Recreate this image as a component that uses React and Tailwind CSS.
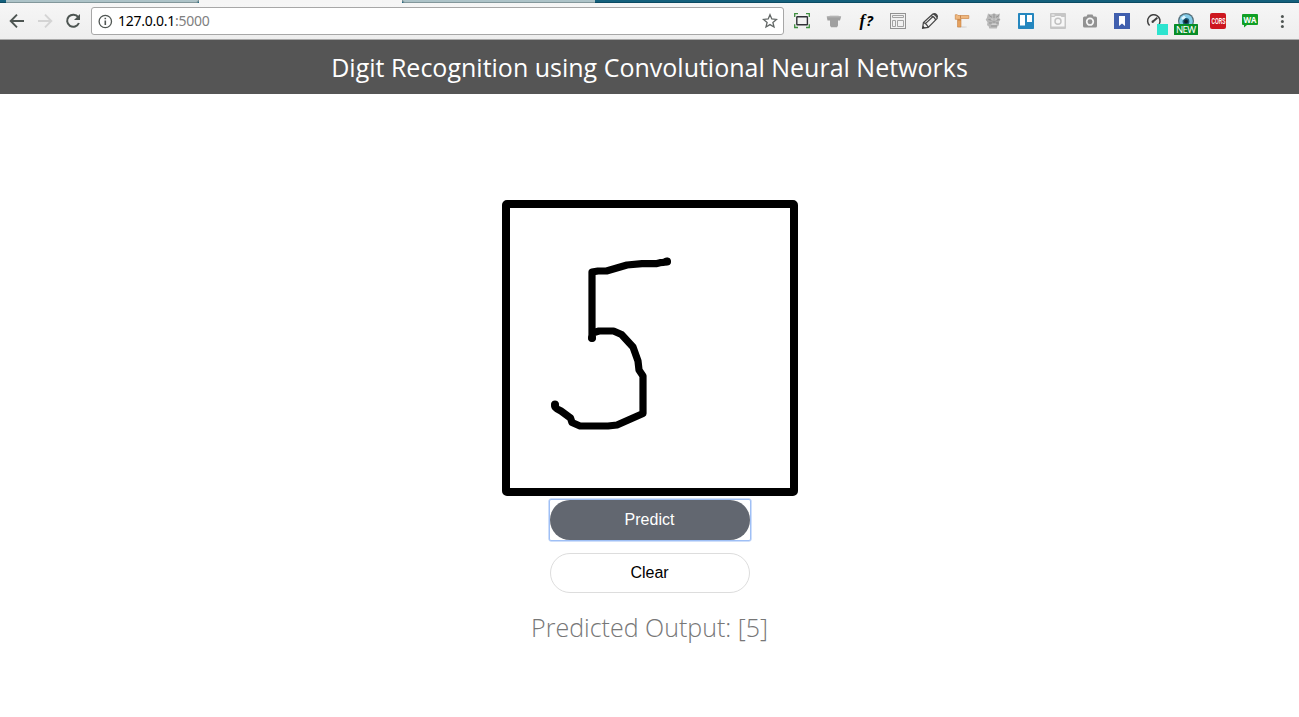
import React from "react";

function Tool({ children, label }) {
  return (
    <svg aria-label={label} className="h-9 w-8 shrink-0 overflow-visible" viewBox="0 3 32 36" fill="none">
      {children}
    </svg>
  );
}

function TabStrip() {
  return (
    <div className="flex h-[3px] bg-[#14607c]">
      <div className="w-[6px] border-b border-[#0b4a62]" />
      <div className="w-[193px] rounded-br-sm border-r border-b border-[#82979b] bg-[#adc3c8]" />
      <div className="w-[203px] bg-[#f5f5f5]" />
      <div className="w-[193px] rounded-bl-sm border-b border-l border-[#82979b] bg-[#adc3c8]" />
      <div className="flex-1 border-b border-[#0b4a62]" />
    </div>
  );
}

function Extensions() {
  return (
    <div className="ml-0.5 flex">
      <Tool label="capture">
        <path d="M8.7 17v-3.3H12M20 13.7h3.3V17M23.3 24.3v3.2H20M12 27.5H8.7v-3.2" stroke="#3f8f3f" strokeWidth="1.3" />
        <rect x="10.8" y="16.8" width="10.6" height="8" rx=".5" stroke="#303036" strokeWidth="1.4" />
      </Tool>
      <Tool label="pillar">
        <path d="M8.7 16.5l3.5-.8h8l3 .8-1.2 4h-2v5l-1 1.7h-6l-1-1.7v-5h-2.5z" fill="#a0a0a0" />
        <path d="M9 16.8h14" stroke="#bcbcbc" />
      </Tool>
      <Tool label="font finder">
        <text x="9.5" y="25.500" fill="#000" className="font-['Liberation_Serif',serif] text-[17px] font-bold italic">f</text>
        <text x="16.300" y="25.500" fill="#000" className="font-['Open_Sans',sans-serif] text-[14.5px] font-bold italic">?</text>
      </Tool>
      <Tool label="layout">
        <rect x="8.5" y="13.5" width="15" height="15" fill="#f2f2f2" stroke="#929292" />
        <path d="M10.5 15.5h11v2h-11zM10.5 20.5h3v6h-3zM15.5 20.5h6v6h-6z" stroke="#a3a3a3" />
      </Tool>
      <Tool label="pencil">
        <path d="M8.6 28.2l.8-5.600L18.800 14q2-1.200 3.800.6t.6 3.800l-9 9zM9.400 22.600q3.200.6 4.800 4.800M17.100 15.600q3.500.9 4.500 4.300M19 13.900q3.200 1 4.300 4.100M11.400 23.600l7.900-7.300" stroke="#454545" strokeWidth="1.200" />
        <path d="M8.600 28.200l.4-2.500 2 2z" fill="#333" />
      </Tool>
      <Tool label="hammer">
        <ellipse cx="16" cy="27" rx="5" ry="1" fill="#dedede" />
        <path d="M11.500 18h3.500v9h-3.500z" fill="#e5a15e" stroke="#c98343" strokeWidth=".6" />
        <path d="M9.300 14.700h2l.7.8h10.800v3H15l-.8.8H9.300z" fill="#efb77e" stroke="#cc884b" strokeWidth=".7" />
        <path d="M14.500 15.500v3M12 20h3" stroke="#bd773b" strokeWidth=".8" />
      </Tool>
      <Tool label="mascot">
        <path d="M10 13.500l3 1 3-1.300 3 1.300 3-1-.8 4.200 1.200 2-1.800 2.500.4 3-1.400.8-.8 2.500h-7.500l-.8-2.500-1.500-.8.500-3-1.800-2.500 1.200-2z" fill="#b8b8b8" />
        <path d="M11 15.500l3 1.800M21 15.500l-3 1.800M10.500 19.500l3 .7M21.500 19.500l-3 .7M11 23h3M21 23h-3M16 14v4M13 26h6M14.500 22h3" stroke="#929292" />
        <path d="M14 18.600v1.200M18 18.600v1.200M13.500 24.200h5" stroke="#dedede" />
      </Tool>
      <Tool label="boards">
        <rect x="8" y="13" width="16" height="16" rx=".7" fill="#2587bf" />
        <path d="M10 15h5v10.500h-5zM17 15h5v7h-5z" fill="#fff" />
      </Tool>
      <Tool label="snapshot">
        <rect x="8" y="13" width="16" height="16" rx="1" fill="#c6c6c6" />
        <path d="M9.500 17h3l1-1h5l1 1h3v9.500h-13z" fill="#f7f7f7" />
        <circle cx="16" cy="21.300" r="3" stroke="#c2c2c2" strokeWidth="1.500" />
        <path d="M9.500 15h3" stroke="#f7f7f7" />
      </Tool>
      <Tool label="camera">
        <path d="M9 18q0-1.500 1.500-1.500h2l1-2h5l1 2h2Q23 16.500 23 18v8q0 1.500-1.500 1.500h-11Q9 27.500 9 26z" fill="#929292" />
        <circle cx="16" cy="21.700" r="3.300" fill="#929292" stroke="#f5f5f5" strokeWidth="1.700" />
      </Tool>
      <Tool label="bookmark">
        <rect x="8" y="13" width="16" height="16" fill="#405fae" />
        <path d="M13 16h6v10l-3-2.500-3 2.500z" fill="#fff" />
      </Tool>
      <Tool label="performance">
        <path d="M11.600 25.500a6.200 6.200 0 1 1 9.600-1.500" stroke="#414141" strokeWidth="1.500" />
        <path d="M15 21.500l4.300-3.800" stroke="#414141" strokeWidth="1.900" />
        <circle cx="14.700" cy="21.700" r="1.200" fill="#414141" />
        <rect x="19" y="24" width="11" height="11" fill="#2de4cf" />
      </Tool>
      <Tool label="watcher">
        <circle cx="16" cy="21" r="8" fill="#536d78" />
        <circle cx="16" cy="21" r="6.800" fill="#82cbe9" />
        <circle cx="16" cy="21.500" r="3.400" fill="#1a5875" />
        <circle cx="16" cy="21.500" r="1.900" fill="#101e28" />
        <path d="M11 18l3-2.500 2 2-3 2.500z" fill="#dff7ff" />
        <rect x="4" y="24" width="24" height="11" rx=".5" fill="#078d27" />
        <text x="6" y="33" fill="white" className="font-['Noto_Sans',sans-serif] text-[9.5px]" textLength="20">NEW</text>
      </Tool>
      <Tool label="CORS">
        <rect x="8" y="13" width="16" height="16" rx="2" fill="#cd171f" />
        <text x="9.500" y="24" fill="white" className="font-['Liberation_Sans',sans-serif] text-[8.5px] font-bold" textLength="14" lengthAdjust="spacingAndGlyphs">CORS</text>
      </Tool>
      <Tool label="WA">
        <path d="M9 14h14q1 0 1 1v9q0 1-1 1H13l-3 2.500V25H9q-1 0-1-1v-9q0-1 1-1z" fill="#10a025" />
        <text x="9.500" y="23" fill="white" className="font-['Open_Sans',sans-serif] text-[8.5px] font-bold" textLength="13" lengthAdjust="spacingAndGlyphs">WA</text>
      </Tool>
      <Tool label="menu">
        <g fill="#505653"><circle cx="16.400" cy="16.400" r="1.500" /><circle cx="16.400" cy="21.400" r="1.500" /><circle cx="16.400" cy="26.400" r="1.500" /></g>
      </Tool>
    </div>
  );
}

function BrowserChrome() {
  return (
    <div className="h-10">
      <TabStrip />
      <div className="flex h-[37px] border-b border-[#a9a9a9] bg-linear-to-b from-[#f6f6f6] to-[#eeeeee]">
        <svg className="h-9 w-[91px] shrink-0" viewBox="0 3 91 36" fill="none">
          <path d="M24 21H11M17 14.700L10.700 21l6.300 6.300" stroke="#4d5552" strokeWidth="1.900" />
          <path d="M38 21h13M45 14.700l6.300 6.300-6.300 6.300" stroke="#d4d4d4" strokeWidth="1.900" />
          <path d="M78.200 17.200A6.100 6.100 0 1 0 78.900 23" stroke="#4d5552" strokeWidth="2" />
          <path d="M80 14v6h-6z" fill="#4d5552" />
        </svg>
        <div className="mt-1 flex h-7 w-[693px] shrink-0 items-center rounded-[3px] border border-[#a7a7a7] bg-white pr-[5px] pl-[6px]">
          <svg className="size-[15px]" viewBox="0 0 15 15" fill="none">
            <circle cx="7.300" cy="7.500" r="6.200" stroke="#505653" strokeWidth="1.300" />
            <path d="M7.300 6.500V11M7.300 3.800v1.500" stroke="#505653" strokeWidth="1.600" />
          </svg>
          <div className="ml-[5px] flex-1 font-['Noto_Sans',sans-serif] text-[14px] leading-[26px] tracking-[-0.25px] text-black">127.0.0.1<span className="text-[#808080]">:5000</span></div>
          <svg className="h-4 w-4" viewBox="0 0 16 16" fill="none">
            <path d="M8 1.700l1.800 4.300 4.700.4-3.600 3.100 1.100 4.500L8 11.600 4 14l1.100-4.500-3.600-3.100L6.200 6z" stroke="#616665" strokeWidth="1.300" />
          </svg>
        </div>
        <Extensions />
      </div>
    </div>
  );
}

export default function App() {
  return (
    <div className="h-[717px] w-[1299px] overflow-hidden bg-white">
      <BrowserChrome />
      <header className="flex h-[54px] items-center justify-center bg-[#555555]">
        <h1 className="font-['Open_Sans',sans-serif] text-[25px] leading-[54px] whitespace-nowrap text-white">Digit Recognition using Convolutional Neural Networks</h1>
      </header>
      <main className="flex flex-col items-center pt-[106px]">
        <div className="ml-px h-[296px] w-[296px] rounded-[5px] border-8 border-black bg-white">
          <svg className="block h-[280px] w-[280px]" viewBox="510 208 280 280" fill="none">
            <path d="M667 261.500L663 262.500 660 262.700 656 263.700H642L627 265 606.500 271H598L592 272V338L592.500 333 599 331H613.500L621.500 334.500 633 347 638 361 639 370 643 376V413.500L617 425 608 426H580L572 422.500 570.500 418 561 411 557 408.800 555 407V404" stroke="#000" strokeWidth="7.200" strokeLinecap="round" strokeLinejoin="round" />
            <path d="M667 261.500h.01M592 338h.01M555 405h.01" stroke="#000" strokeWidth="8" strokeLinecap="round" />
          </svg>
        </div>
        <button className="relative mt-1 ml-px h-10 w-[200px] rounded-full bg-[#626770] font-['Liberation_Sans',sans-serif] text-[16px] leading-[38px] text-white outline-none">
          <span className="mr-px block">Predict</span>
          <span className="pointer-events-none absolute -inset-px rounded-xs border-[1.5px] border-[#9fbff5]" />
          <span className="pointer-events-none absolute -inset-px rounded-xs ring-[0.5px] ring-[#9fbff5]" />
        </button>
        <button className="mt-[13px] ml-px h-10 w-[200px] rounded-full border border-[#dddddd] bg-white font-['Liberation_Sans',sans-serif] text-[16px] leading-[38px] text-black"><span className="mr-px block">Clear</span></button>
        <p className="mt-4 font-['Open_Sans',sans-serif] text-[25px] leading-[36px] font-light whitespace-nowrap text-[#777777]">Predicted Output: [5]</p>
      </main>
    </div>
  );
}
